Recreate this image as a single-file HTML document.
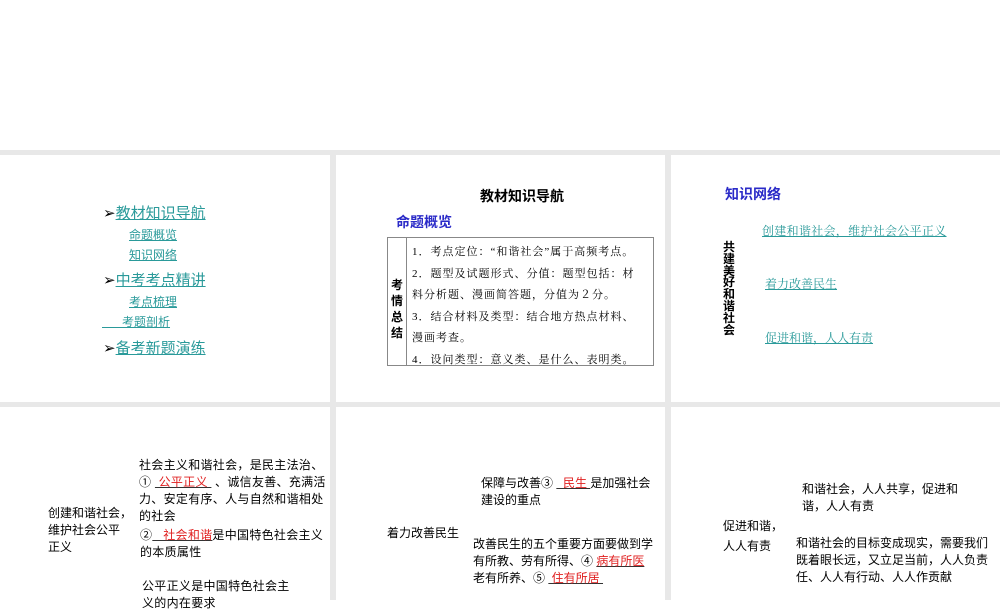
<!DOCTYPE html>
<html><head><meta charset="utf-8"><style>
*{margin:0;padding:0;box-sizing:border-box}
body{width:1000px;height:600px;background:#fff;position:relative;overflow:hidden;font-family:"Liberation Sans","Noto Sans CJK SC",sans-serif;color:#000}
.g{position:absolute;background:#e8e8e8}
.a{position:absolute;white-space:nowrap}
.lk{color:#2a9a9a;text-decoration:underline}
.sf{font-family:"Liberation Serif","Noto Serif CJK SC",serif}
.r{color:#e02020;text-decoration:underline;text-decoration-color:#333}
.t{font-size:12px;line-height:17px}
</style></head><body>
<div class="g" style="left:0;top:150px;width:1000px;height:5px"></div>
<div class="g" style="left:0;top:402px;width:1000px;height:5px"></div>
<div class="g" style="left:330px;top:150px;width:6px;height:450px"></div>
<div class="g" style="left:665px;top:150px;width:6px;height:450px"></div>

<!-- panel 1 -->
<div class="a" style="left:103px;top:202px;font-size:15px">➢<span class="lk">教材知识导航</span></div>
<div class="a lk" style="left:129px;top:226px;font-size:12px">命题概览</div>
<div class="a lk" style="left:129px;top:246px;font-size:12px">知识网络</div>
<div class="a" style="left:103px;top:269px;font-size:15px">➢<span class="lk">中考考点精讲</span></div>
<div class="a lk" style="left:129px;top:293px;font-size:12px">考点梳理</div>
<div class="a lk" style="left:102px;top:313px;font-size:12px">&nbsp;&nbsp;&nbsp;&nbsp;&nbsp;&nbsp;考题剖析</div>
<div class="a" style="left:103px;top:337px;font-size:15px">➢<span class="lk">备考新题演练</span></div>

<!-- panel 2 -->
<div class="a" style="left:480px;top:186px;font-size:14px;font-weight:bold">教材知识导航</div>
<div class="a" style="left:396px;top:212px;font-size:14px;font-weight:bold;color:#2b2bc8">命题概览</div>
<div style="position:absolute;left:387px;top:237px;width:267px;height:129px;border:1px solid #888">
<div style="position:absolute;left:0;top:0;width:19px;height:127px;border-right:1px solid #888;font-size:12px;font-weight:bold;line-height:16px;padding-top:39px;text-align:center">考<br>情<br>总<br>结</div>
<div class="sf" style="position:absolute;left:24px;top:4px;width:245px;font-size:11px;line-height:21.6px;letter-spacing:1px;white-space:nowrap">1．考点定位：“和谐社会”属于高频考点。<br>2．题型及试题形式、分值：题型包括：材<br>料分析题、漫画简答题，分值为２分。<br>3．结合材料及类型：结合地方热点材料、<br>漫画考查。<br>4．设问类型：意义类、是什么、表明类。</div>
</div>

<!-- panel 3 -->
<div class="a" style="left:725px;top:184px;font-size:14px;font-weight:bold;color:#2b2bc8">知识网络</div>
<div class="a sf lk" style="left:762px;top:222px;font-size:12px;letter-spacing:0.3px">创建和谐社会，维护社会公平正义</div>
<div class="a sf lk" style="left:765px;top:275px;font-size:12px">着力改善民生</div>
<div class="a sf lk" style="left:765px;top:329px;font-size:12px">促进和谐，人人有责</div>
<div class="a" style="left:723px;top:242px;width:14px;font-size:12px;font-weight:bold;line-height:11.8px;white-space:normal">共建美好和谐社会</div>

<!-- panel 4 -->
<div class="a t" style="left:48px;top:505px">创建和谐社会，<br>维护社会公平<br>正义</div>
<div class="a t" style="left:139px;top:457px;letter-spacing:0.3px">社会主义和谐社会，是民主法治、<br>①&nbsp;<span class="r">&nbsp;公平正义&nbsp;</span>&nbsp;、诚信友善、充满活<br>力、安定有序、人与自然和谐相处<br>的社会</div>
<div class="a t" style="left:140px;top:527px;letter-spacing:0.3px">②<span class="r">&nbsp;&nbsp;&nbsp;社会和谐</span>是中国特色社会主义<br>的本质属性</div>
<div class="a t" style="left:142px;top:578px;letter-spacing:0.3px">公平正义是中国特色社会主<br>义的内在要求</div>

<!-- panel 5 -->
<div class="a t" style="left:387px;top:525px">着力改善民生</div>
<div class="a t" style="left:481px;top:475px">保障与改善③&nbsp;<span class="r">&nbsp;&nbsp;民生&nbsp;</span>是加强社会<br>建设的重点</div>
<div class="a t" style="left:473px;top:536px">改善民生的五个重要方面要做到学<br>有所教、劳有所得、④&nbsp;<span class="r">病有所医</span><br>老有所养、⑤&nbsp;<span class="r">&nbsp;住有所居&nbsp;</span></div>

<!-- panel 6 -->
<div class="a t" style="left:802px;top:481px">和谐社会，人人共享，促进和<br>谐，人人有责</div>
<div class="a t" style="left:723px;top:516px;line-height:20px">促进和谐，<br>人人有责</div>
<div class="a t" style="left:796px;top:535px">和谐社会的目标变成现实，需要我们<br>既着眼长远，又立足当前，人人负责<br>任、人人有行动、人人作贡献</div>
</body></html>
